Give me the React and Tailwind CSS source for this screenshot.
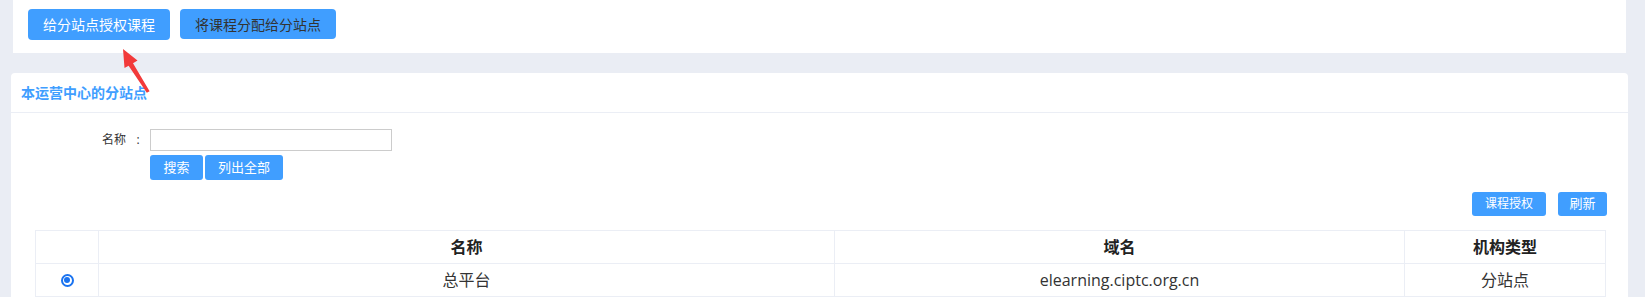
import React from 'react';

const font = { fontFamily: '"Open Sans", "Noto Sans CJK SC", sans-serif' };

const columns = [
  { key: 'radio', label: '', width: 'w-[63px]' },
  { key: 'name', label: '名称', width: 'w-[736px]' },
  { key: 'domain', label: '域名', width: 'w-[570px]' },
  { key: 'type', label: '机构类型', width: 'w-[201px]' },
];

const rows = [
  { id: 1, name: '总平台', domain: 'elearning.ciptc.org.cn', type: '分站点', checked: true },
];

const Radio = ({ checked }) => (
  <span className="inline-flex w-[13px] h-[13px] rounded-full border-[2px] border-[#1a73f0] items-center justify-center bg-white">
    {checked && <span className="w-[6px] h-[6px] rounded-full bg-[#1a73f0]"></span>}
  </span>
)

// red annotation arrow pointing at the first button
const Arrow = () => (
  <svg className="absolute left-0 top-0 pointer-events-none" width="200" height="120" viewBox="0 0 200 120">
    <polygon points="123,49 137.5,60.5 133,63.2 149.6,91.2 146.8,92.8 128.6,65.8 124.5,68" fill="#f23a3a" />
  </svg>
)

const App = () => {
  return (
    <div className="relative min-h-[297px] bg-[#eaedf4] overflow-hidden" style={font}>
      <div className="ml-[13px] w-[1613px] h-[53px] bg-white flex gap-[10px] pl-[15px] pt-[9px]">
        <button className="w-[142px] h-[31px] rounded-[4px] bg-[#409eff] text-white text-[14px]">给分站点授权课程</button>
        <button className="w-[156px] h-[30px] rounded-[4px] bg-[#409eff] text-[#333] text-[14px]">将课程分配给分站点</button>
      </div>

      <div className="ml-[11px] w-[1617px] mt-[20px] bg-white rounded-[4px] pb-[20px]">
        <div className="h-[40px] border-b border-[#ebeef5] px-[10px] flex items-center text-[14px] font-bold text-[#409eff]">
          本运营中心的分站点
        </div>

        <div className="pt-[16px]">
          <div className="flex items-center">
            <div className="w-[139px] flex justify-end items-center text-[12px] text-[#333]">
              <span>名称</span>
              <span className="w-[24px] text-center">:</span>
            </div>
            <input className="w-[242px] h-[22px] border border-[#ccc] outline-none px-1 text-[12px]" />
          </div>
          <div className="ml-[139px] mt-[4px] flex gap-[2px]">
            <button className="w-[53px] h-[25px] rounded-[3px] bg-[#409eff] text-white text-[13px]">搜索</button>
            <button className="w-[78px] h-[25px] rounded-[3px] bg-[#409eff] text-white text-[13px]">列出全部</button>
          </div>
        </div>

        <div className="mt-[12px] flex justify-end gap-[12px] pr-[21px]">
          <button className="w-[74px] h-[24px] rounded-[3px] bg-[#409eff] text-white text-[12px]">课程授权</button>
          <button className="w-[49px] h-[24px] rounded-[3px] bg-[#409eff] text-white text-[13px]">刷新</button>
        </div>

        <table className="mt-[14px] ml-[24px] w-[1570px] border-collapse table-fixed text-[16px] text-[#333]">
          <thead>
            <tr className="h-[33px]">
              {columns.map((c) => (
                <th key={c.key} className={c.width + ' border border-[#ebeef5] font-bold text-center text-[#222]'}>{c.label}</th>
              ))}
            </tr>
          </thead>
          <tbody>
            {rows.map((r) => (
              <tr key={r.id} className="h-[33px]">
                <td className="border border-[#ebeef5] text-center">
                  <span className="inline-flex relative top-[-3px]"><Radio checked={r.checked} /></span>
                </td>
                <td className="border border-[#ebeef5] text-center">{r.name}</td>
                <td className="border border-[#ebeef5] text-center">{r.domain}</td>
                <td className="border border-[#ebeef5] text-center">{r.type}</td>
              </tr>
            ))}
          </tbody>
        </table>
      </div>

      <Arrow />
    </div>
  )
}

export default App;
